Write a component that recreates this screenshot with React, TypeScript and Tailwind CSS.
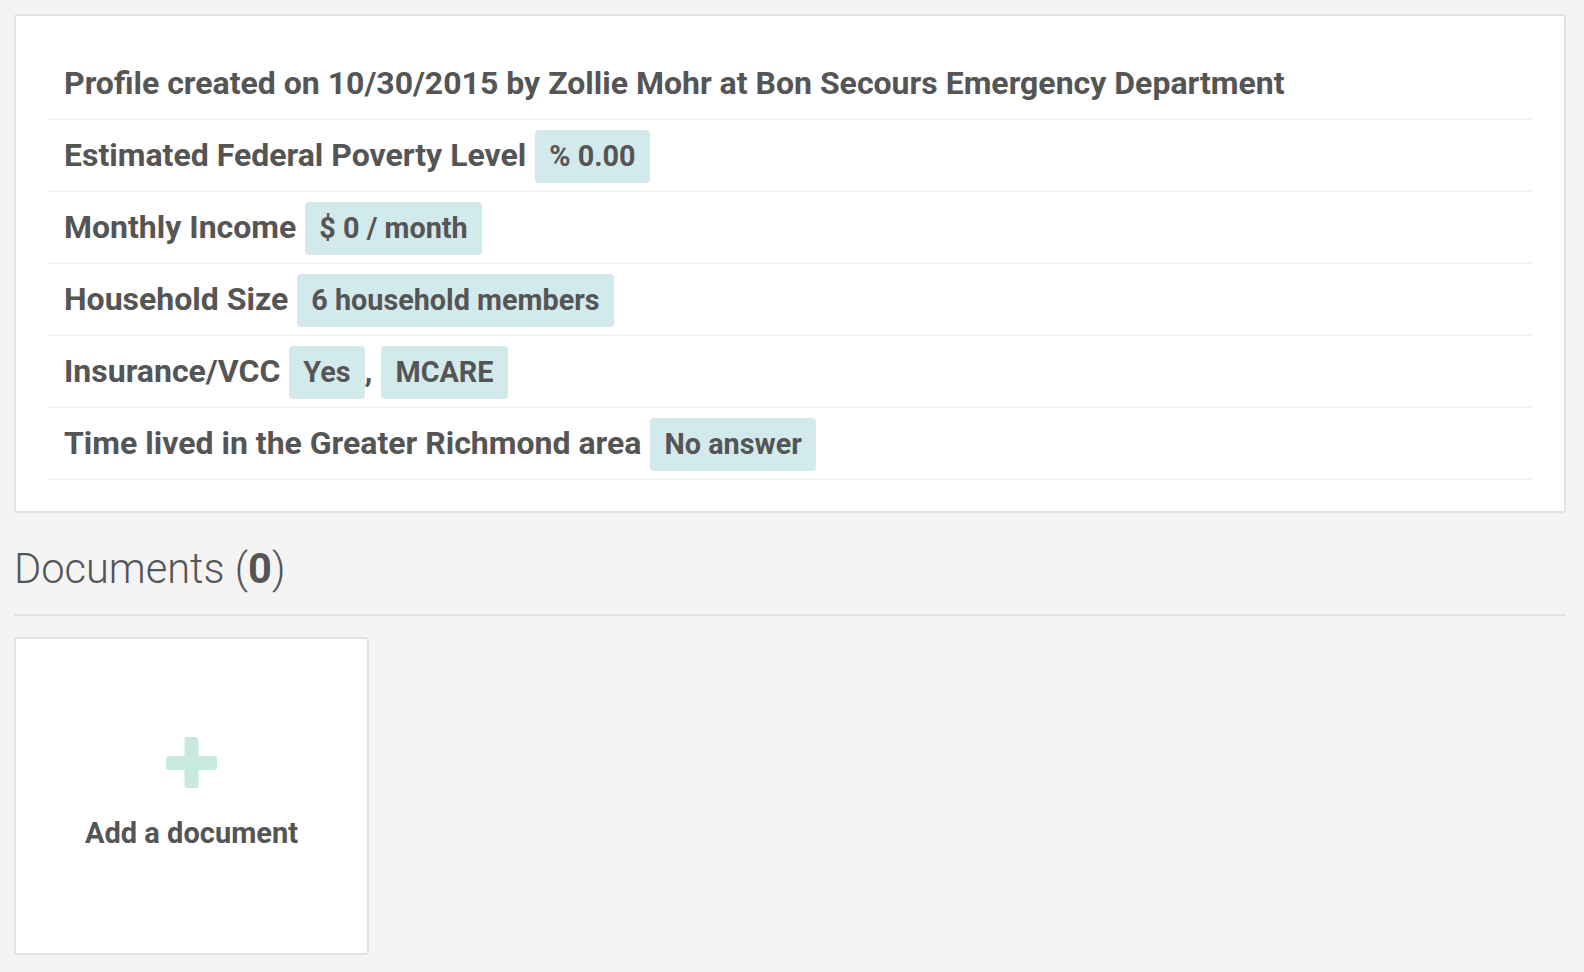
import React from 'react'

type Row = {
  label: string
  values?: string[]
}

const ROWS: Row[] = [
  { label: 'Profile created on 10/30/2015 by Zollie Mohr at Bon Secours Emergency Department' },
  { label: 'Estimated Federal Poverty Level', values: ['% 0.00'] },
  { label: 'Monthly Income', values: ['$ 0 / month'] },
  { label: 'Household Size', values: ['6 household members'] },
  { label: 'Insurance/VCC', values: ['Yes', 'MCARE'] },
  { label: 'Time lived in the Greater Richmond area', values: ['No answer'] },
]

function Badge({ children }: { children: React.ReactNode }) {
  return (
    <span className="mt-[3px] inline-flex h-[53px] items-center rounded-[4px] bg-[#d3eaec] px-[14px] text-[28.8px]">
      {children}
    </span>
  )
}

function ProfileRow({ row }: { row: Row }) {
  return (
    <div className="flex h-[72px] items-center border-b-2 border-[#f4f4f4] pl-4 text-[32px] leading-none font-bold">
      <span>{row.label}</span>
      {row.values && (
        <div className="ml-[9px] flex items-center">
          {row.values.map((v, i) => (
            <React.Fragment key={v}>
              {i > 0 && <span className="mr-[9px]">,</span>}
              <Badge>{v}</Badge>
            </React.Fragment>
          ))}
        </div>
      )}
    </div>
  )
}

function PlusIcon() {
  return (
    <svg width="51" height="51" viewBox="0 0 51 51" fill="#c8eadc">
      <rect x="0" y="19" width="51" height="14" rx="3" />
      <rect x="18.5" y="0" width="14" height="51" rx="3" />
    </svg>
  )
}

export default function App() {
  return (
    <div className="min-h-[972px] bg-[#f4f4f4] pt-[14px] pr-[18px] pb-4 pl-[14px] font-['Roboto',sans-serif] text-[#555555]">
      <div className="rounded-[3px] border-2 border-[#e3e3e3] bg-white px-8 pt-8 pb-[31px]">
        {ROWS.map((row) => (
          <ProfileRow key={row.label} row={row} />
        ))}
      </div>

      <h2 className="mt-[35px] pb-6 text-[41.6px] leading-none font-light">
        Documents (<span className="font-bold">0</span>)
      </h2>
      <div className="h-[2px] bg-[#e3e3e3]" />

      <div className="mt-[21px] flex h-[318px] w-[355px] flex-col items-center justify-center gap-[31px] rounded-[3px] border-2 border-[#e3e3e3] bg-white pb-[6px]">
        <PlusIcon />
        <div className="text-[29px] leading-none font-bold">Add a document</div>
      </div>
    </div>
  )
}
